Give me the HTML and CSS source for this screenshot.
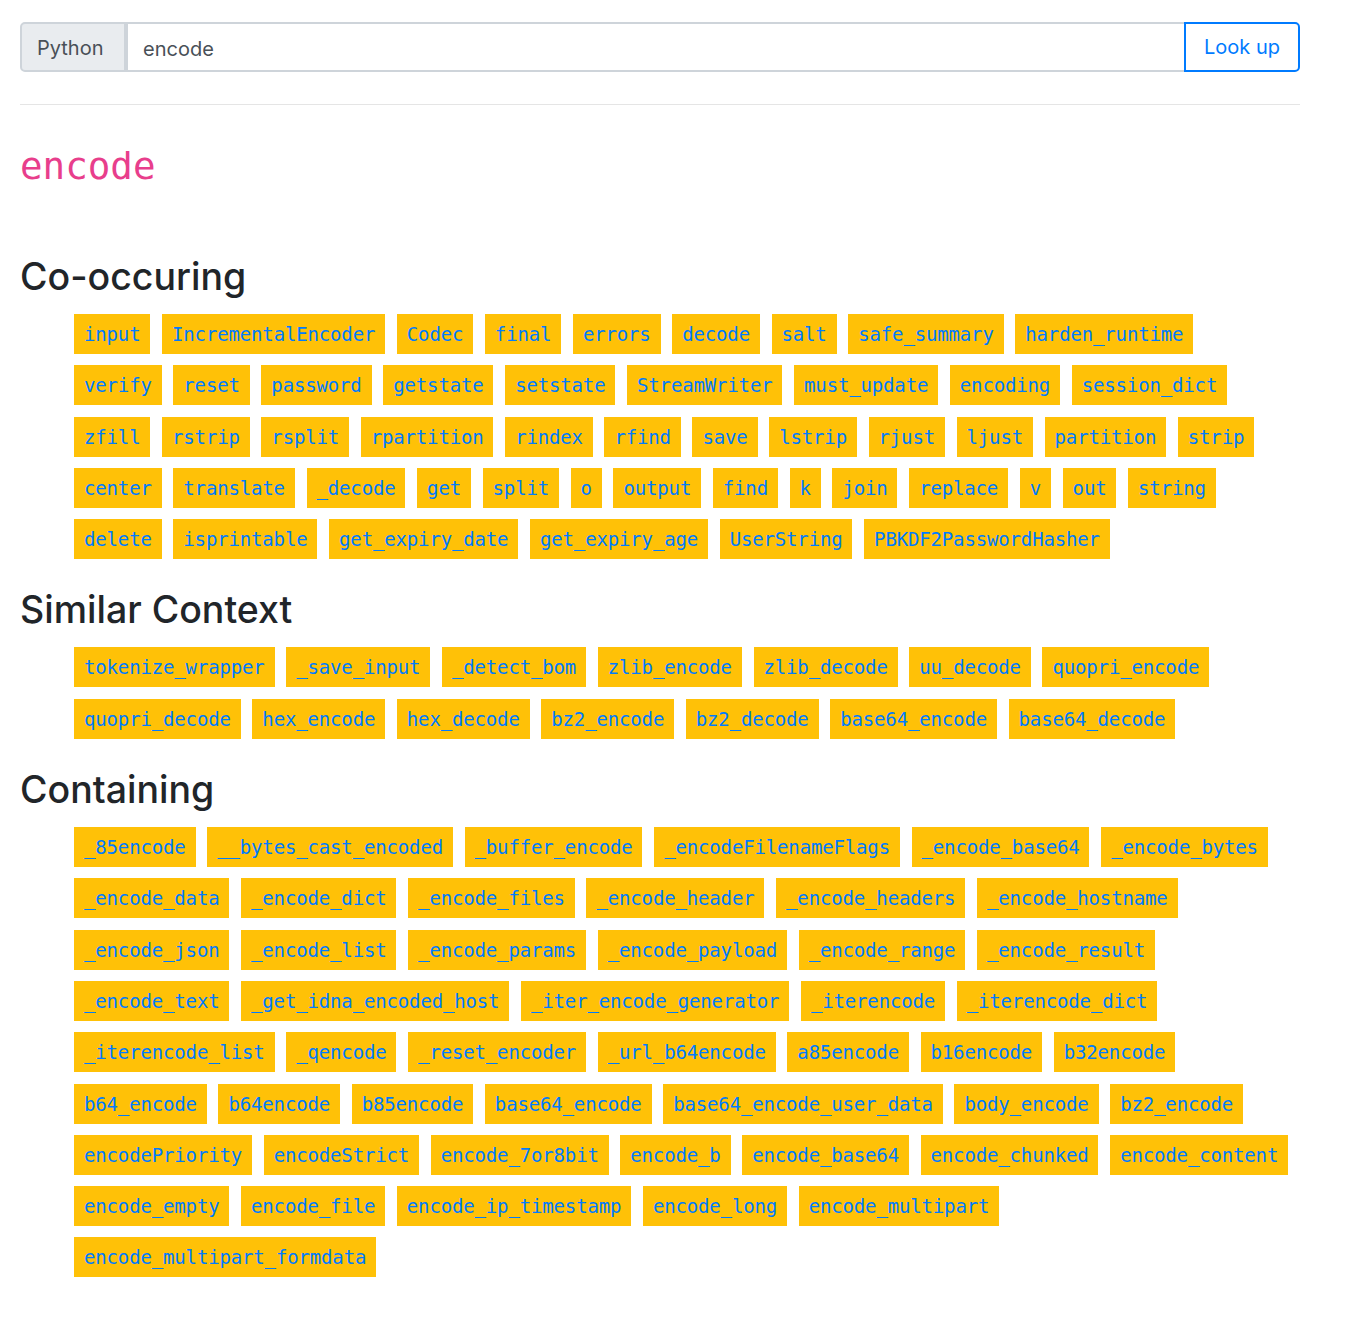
FILE: index.html
```html
<!DOCTYPE html>
<html>
<head>
<meta charset="utf-8">
<title>encode</title>
<link rel="stylesheet" href="styles.css">
</head>
<body>
<div class="container">
  <form class="search">
    <span class="lang">Python</span>
    <input class="query" type="text" value="encode">
    <button class="lookup" type="button">Look up</button>
  </form>
  <hr class="rule">
  <h1 class="term">encode</h1>

  <h2 class="section">Co-occuring</h2>
  <div class="tags">
    <span class="tag">input</span><span class="tag">IncrementalEncoder</span><span class="tag">Codec</span><span class="tag">final</span><span class="tag">errors</span><span class="tag">decode</span><span class="tag">salt</span><span class="tag">safe_summary</span><span class="tag">harden_runtime</span>
    <span class="tag">verify</span><span class="tag">reset</span><span class="tag">password</span><span class="tag">getstate</span><span class="tag">setstate</span><span class="tag">StreamWriter</span><span class="tag">must_update</span><span class="tag">encoding</span><span class="tag">session_dict</span>
    <span class="tag">zfill</span><span class="tag">rstrip</span><span class="tag">rsplit</span><span class="tag">rpartition</span><span class="tag">rindex</span><span class="tag">rfind</span><span class="tag">save</span><span class="tag">lstrip</span><span class="tag">rjust</span><span class="tag">ljust</span><span class="tag">partition</span><span class="tag">strip</span>
    <span class="tag">center</span><span class="tag">translate</span><span class="tag">_decode</span><span class="tag">get</span><span class="tag">split</span><span class="tag">o</span><span class="tag">output</span><span class="tag">find</span><span class="tag">k</span><span class="tag">join</span><span class="tag">replace</span><span class="tag">v</span><span class="tag">out</span><span class="tag">string</span>
    <span class="tag">delete</span><span class="tag">isprintable</span><span class="tag">get_expiry_date</span><span class="tag">get_expiry_age</span><span class="tag">UserString</span><span class="tag">PBKDF2PasswordHasher</span>
  </div>

  <h2 class="section">Similar Context</h2>
  <div class="tags">
    <span class="tag">tokenize_wrapper</span><span class="tag">_save_input</span><span class="tag">_detect_bom</span><span class="tag">zlib_encode</span><span class="tag">zlib_decode</span><span class="tag">uu_decode</span><span class="tag">quopri_encode</span>
    <span class="tag">quopri_decode</span><span class="tag">hex_encode</span><span class="tag">hex_decode</span><span class="tag">bz2_encode</span><span class="tag">bz2_decode</span><span class="tag">base64_encode</span><span class="tag">base64_decode</span>
  </div>

  <h2 class="section">Containing</h2>
  <div class="tags">
    <span class="tag">_85encode</span><span class="tag">__bytes_cast_encoded</span><span class="tag">_buffer_encode</span><span class="tag">_encodeFilenameFlags</span><span class="tag">_encode_base64</span><span class="tag">_encode_bytes</span>
    <span class="tag">_encode_data</span><span class="tag">_encode_dict</span><span class="tag">_encode_files</span><span class="tag">_encode_header</span><span class="tag">_encode_headers</span><span class="tag">_encode_hostname</span>
    <span class="tag">_encode_json</span><span class="tag">_encode_list</span><span class="tag">_encode_params</span><span class="tag">_encode_payload</span><span class="tag">_encode_range</span><span class="tag">_encode_result</span>
    <span class="tag">_encode_text</span><span class="tag">_get_idna_encoded_host</span><span class="tag">_iter_encode_generator</span><span class="tag">_iterencode</span><span class="tag">_iterencode_dict</span>
    <span class="tag">_iterencode_list</span><span class="tag">_qencode</span><span class="tag">_reset_encoder</span><span class="tag">_url_b64encode</span><span class="tag">a85encode</span><span class="tag">b16encode</span><span class="tag">b32encode</span>
    <span class="tag">b64_encode</span><span class="tag">b64encode</span><span class="tag">b85encode</span><span class="tag">base64_encode</span><span class="tag">base64_encode_user_data</span><span class="tag">body_encode</span><span class="tag">bz2_encode</span>
    <span class="tag">encodePriority</span><span class="tag">encodeStrict</span><span class="tag">encode_7or8bit</span><span class="tag">encode_b</span><span class="tag">encode_base64</span><span class="tag">encode_chunked</span><span class="tag">encode_content</span>
    <span class="tag">encode_empty</span><span class="tag">encode_file</span><span class="tag">encode_ip_timestamp</span><span class="tag">encode_long</span><span class="tag">encode_multipart</span>
    <span class="tag">encode_multipart_formdata</span>
  </div>
</div>
</body>
</html>
```

FILE: styles.css
```css
* { box-sizing: border-box; }

body {
  margin: 0;
  background: #fff;
  color: #212529;
  font-family: Inter, "Noto Sans", "Liberation Sans", sans-serif;
}

.container {
  width: 1320px;
  padding: 22px 20px 40px;
}

.search {
  display: flex;
  height: 50px;
  margin: 0;
}

.lang {
  display: flex;
  align-items: center;
  padding: 1px 16px 0 15px;
  background: #e9ecef;
  border: 2px solid #ced4da;
  border-radius: 5px 0 0 5px;
  color: #495057;
  font-size: 20px;
  width: 106px;
}

.query {
  flex: 1;
  min-width: 0;
  height: 50px;
  margin: 0;
  padding: 3px 15px 0;
  border: 2px solid #ced4da;
  border-right: none;
  color: #495057;
  font-family: inherit;
  font-size: 20px;
  outline: none;
  background: #fff;
}

.lookup {
  width: 116px;
  height: 50px;
  margin: 0;
  padding: 0;
  border: 2px solid #007bff;
  border-radius: 0 5px 5px 0;
  background: #fff;
  color: #007bff;
  font-family: inherit;
  font-size: 20px;
}

.rule {
  margin: 32px 0 0;
  border: 0;
  border-top: 1px solid rgba(0, 0, 0, 0.1);
}

.term {
  margin: 39px 0 65px;
  color: #e83e8c;
  font-family: "DejaVu Sans Mono", monospace;
  font-weight: normal;
  font-size: 37.5px;
  line-height: 45px;
}

.section {
  margin: 17px 0 15px;
  font-size: 37.5px;
  font-weight: 500;
  line-height: 45px;
  color: #212529;
}

.tags {
  display: flex;
  flex-wrap: wrap;
  margin: 0 -1px 0 0;
  padding: 0 0 0 54px;
}

.tag {
  margin: 0 11.7px 11.3px 0;
  padding: 0 9.9px 0 10px;
  background: #ffc107;
  color: #007bff;
  font-family: "DejaVu Sans Mono", monospace;
  font-size: 19px;
  letter-spacing: -0.15px;
  line-height: 40px;
}
```
